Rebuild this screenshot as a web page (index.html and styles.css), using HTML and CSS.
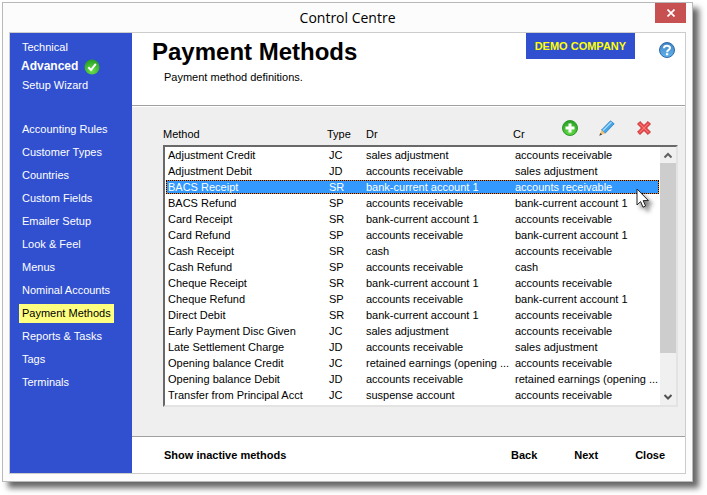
FILE: index.html
```html
<!DOCTYPE html>
<html lang="en">
<head>
    <meta charset="UTF-8">
    <meta name="viewport" content="width=device-width, initial-scale=1">
    <title>Control Centre</title>
    <link rel="stylesheet" href="styles.css">
</head>
<body>
<div class="window">
    <div class="titlebar">
        <span class="titlebar-text">Control Centre</span>
        <button class="titlebar-close" type="button" aria-label="Close window">
            <svg width="8" height="8" viewBox="0 0 8 8"><path d="M0.5 0.5L7.5 7.5M7.5 0.5L0.5 7.5" stroke="#fff" stroke-width="1.7"/></svg>
        </button>
    </div>
    <div class="client">
        <nav class="sidebar">
            <ul class="menu">
                <li><a href="#">Technical</a></li>
                <li><a class="current" href="#">Advanced
                    <svg width="16" height="16" viewBox="0 0 16 16">
                        <defs><radialGradient id="green" cx="50%" cy="75%" r="75%"><stop offset="0" stop-color="#6be04b"/><stop offset="1" stop-color="#249c22"/></radialGradient></defs>
                        <circle cx="8" cy="8" r="7.5" fill="url(#green)"/>
                        <path d="M4.3 8.3L7 11L11.8 4.8" fill="none" stroke="#fff" stroke-width="2"/>
                    </svg></a></li>
                <li><a href="#">Setup Wizard</a></li>
            </ul>
            <ul class="menu menu-pages">
                <li><a href="#">Accounting Rules</a></li>
                <li><a href="#">Customer Types</a></li>
                <li><a href="#">Countries</a></li>
                <li><a href="#">Custom Fields</a></li>
                <li><a href="#">Emailer Setup</a></li>
                <li><a href="#">Look &amp; Feel</a></li>
                <li><a href="#">Menus</a></li>
                <li><a href="#">Nominal Accounts</a></li>
                <li><a class="active" href="#">Payment Methods</a></li>
                <li><a href="#">Reports &amp; Tasks</a></li>
                <li><a href="#">Tags</a></li>
                <li><a href="#">Terminals</a></li>
            </ul>
        </nav>
        <main class="main">
            <header class="header">
                <div class="heading">
                    <h1>Payment Methods</h1>
                    <p>Payment method definitions.</p>
                </div>
                <span class="company">DEMO COMPANY</span>
                <button class="icon-button help" type="button" aria-label="Help">
                    <svg width="16" height="16" viewBox="0 0 16 16">
                        <defs><linearGradient id="blue" x2="0" y2="1"><stop offset="0" stop-color="#3f83c4"/><stop offset="1" stop-color="#62b4ec"/></linearGradient></defs>
                        <circle cx="8" cy="8" r="7.5" fill="url(#blue)" stroke="#2f68a8"/>
                        <path d="M5 6.2C5 3 11 3 11 6.1C11 8 8.1 7.8 8.1 10.2" fill="none" stroke="#fff" stroke-width="2"/>
                        <rect x="7" y="11.2" width="2.2" height="2" fill="#fff"/>
                    </svg>
                </button>
            </header>
            <section class="content">
                <div class="list">
                    <table class="methods">
                        <thead>
                        <tr>
                            <th>Method</th>
                            <th>Type</th>
                            <th>Dr</th>
                            <th>Cr</th>
                            <td class="tools">
                                <button class="icon-button" type="button" aria-label="Add">
                                    <svg width="16" height="16" viewBox="0 0 16 16">
                                        <circle cx="8" cy="8" r="7.5" fill="url(#green)" stroke="#2c9a2b"/>
                                        <path d="M8 3.5V12.5M3.5 8H12.5" stroke="#fff" stroke-width="3"/>
                                    </svg>
                                </button>
                                <button class="icon-button" type="button" aria-label="Edit">
                                    <svg width="16" height="16" viewBox="0 0 16 16">
                                        <path d="M2.5 10L11.5 0.8L15.2 3.8L6.2 13.2Z" fill="#45a5e8" stroke="#2c7fc0" stroke-width=".8"/>
                                        <path d="M4 10.5L12.5 2" stroke="#a6dcff" stroke-width="1.3"/>
                                        <path d="M2.5 10L6.2 13.2L0.5 15.5Z" fill="#edc078"/>
                                        <path d="M0.3 15.8L1.3 12.9L3.2 14.6Z" fill="#444"/>
                                    </svg>
                                </button>
                                <button class="icon-button" type="button" aria-label="Delete">
                                    <svg width="16" height="16" viewBox="0 0 16 16">
                                        <path d="M4 1.6L8 5.5L12 1.6L14.4 4L10.5 8L14.4 12L12 14.4L8 10.5L4 14.4L1.6 12L5.5 8L1.6 4Z" fill="#ee5050" stroke="#c72d2d"/>
                                        <path d="M3.6 3.6L12.4 12.4M12.4 3.6L3.6 12.4" stroke="#f77" stroke-width="1"/>
                                    </svg>
                                </button>
                            </td>
                        </tr>
                        </thead>
                        <tbody>
                        <tr><td>Adjustment Credit</td><td>JC</td><td>sales adjustment</td><td>accounts receivable</td></tr>
                        <tr><td>Adjustment Debit</td><td>JD</td><td>accounts receivable</td><td>sales adjustment</td></tr>
                        <tr class="selected"><td>BACS Receipt</td><td>SR</td><td>bank-current account 1</td><td>accounts receivable</td></tr>
                        <tr><td>BACS Refund</td><td>SP</td><td>accounts receivable</td><td>bank-current account 1</td></tr>
                        <tr><td>Card Receipt</td><td>SR</td><td>bank-current account 1</td><td>accounts receivable</td></tr>
                        <tr><td>Card Refund</td><td>SP</td><td>accounts receivable</td><td>bank-current account 1</td></tr>
                        <tr><td>Cash Receipt</td><td>SR</td><td>cash</td><td>accounts receivable</td></tr>
                        <tr><td>Cash Refund</td><td>SP</td><td>accounts receivable</td><td>cash</td></tr>
                        <tr><td>Cheque Receipt</td><td>SR</td><td>bank-current account 1</td><td>accounts receivable</td></tr>
                        <tr><td>Cheque Refund</td><td>SP</td><td>accounts receivable</td><td>bank-current account 1</td></tr>
                        <tr><td>Direct Debit</td><td>SR</td><td>bank-current account 1</td><td>accounts receivable</td></tr>
                        <tr><td>Early Payment Disc Given</td><td>JC</td><td>sales adjustment</td><td>accounts receivable</td></tr>
                        <tr><td>Late Settlement Charge</td><td>JD</td><td>accounts receivable</td><td>sales adjustment</td></tr>
                        <tr><td>Opening balance Credit</td><td>JC</td><td>retained earnings (opening ...</td><td>accounts receivable</td></tr>
                        <tr><td>Opening balance Debit</td><td>JD</td><td>accounts receivable</td><td>retained earnings (opening ...</td></tr>
                        <tr><td>Transfer from Principal Acct</td><td>JC</td><td>suspense account</td><td>accounts receivable</td></tr>
                        </tbody>
                    </table>
                    <div class="scrollbar" aria-hidden="true">
                        <svg width="16" height="16" viewBox="0 0 16 16"><path d="M4.5 10.5L8 7L11.5 10.5" fill="none" stroke="#606060" stroke-width="2"/></svg>
                        <div class="scrollbar-track"><div class="scrollbar-thumb"></div></div>
                        <svg width="16" height="16" viewBox="0 0 16 16"><path d="M4.5 6L8 9.5L11.5 6" fill="none" stroke="#505050" stroke-width="2"/></svg>
                    </div>
                    <svg class="pointer" width="22" height="26" viewBox="0 0 22 26">
                        <path d="M1 1V17L4.6 13.6L7 19.2L9.6 18L7.2 12.6H12.4Z" fill="#fff" stroke="#222"/>
                    </svg>
                </div>
            </section>
            <footer class="footer">
                <button class="inactive" type="button">Show inactive methods</button>
                <button type="button">Back</button>
                <button type="button">Next</button>
                <button type="button">Close</button>
            </footer>
        </main>
    </div>
</div>
</body>
</html>
```
FILE: styles.css
```css
* {
    box-sizing: border-box;
}

body {
    display: flex;
    min-height: 100vh;
    margin: 0;
    padding: 2px 14px 13px 2px;
    background: #fff;
    color: #000;
    font: 11px/14px "Liberation Sans", Arial, sans-serif;
}

button {
    padding: 0;
    border: 0;
    background: none;
    color: inherit;
    font: inherit;
}

svg {
    display: block;
    flex: none;
}

/* window frame */
.window {
    display: flex;
    flex: 1;
    flex-direction: column;
    padding: 0 6px 7px;
    border: 1px solid #b9b9b9;
    background: #fcfcfc;
    box-shadow: 6px 6px 6px rgba(0, 0, 0, .6);
}

.titlebar {
    display: flex;
    align-items: flex-start;
    height: 29px;
}

.titlebar-text {
    flex: 1;
    padding-left: 31px;
    font: 14px/29px "Open Sans", sans-serif;
    text-align: center;
}

.titlebar-close {
    display: flex;
    align-items: center;
    justify-content: center;
    width: 31px;
    height: 20px;
    background: #c75050;
}

.client {
    display: flex;
    flex: 1;
    border: 1px solid #ccc;
}

/* left menu */
.sidebar {
    flex: none;
    width: 122px;
    padding: 5px 9px;
    background: #3050d0;
}

.menu {
    margin: 0;
    padding: 0;
    list-style: none;
}

.menu li {
    display: flex;
}

.menu a {
    display: flex;
    align-items: center;
    gap: 6px;
    padding: 0 3px;
    color: #fff;
    line-height: 19px;
    text-decoration: none;
    white-space: nowrap;
}

.menu .current {
    padding-left: 2px;
    font-size: 12px;
    font-weight: bold;
}

.menu .active {
    background: #ffff80;
    color: #000;
}

.menu-pages {
    display: grid;
    gap: 4px;
    margin-top: 25px;
}

/* right side */
.main {
    display: flex;
    flex: 1;
    flex-direction: column;
    min-width: 0;
    background: #fff;
}

.header {
    display: flex;
    align-items: flex-start;
    gap: 24px;
    height: 73px;
    padding-right: 10px;
    border-bottom: 1px solid #a0a0a0;
}

.heading {
    flex: 1;
    padding: 4px 0 0 20px;
}

.heading h1 {
    margin: 0;
    font-size: 24px;
    line-height: 30px;
}

.heading p {
    margin: 3px 0 0 12px;
}

.company {
    padding: 0 9px;
    background: #3050d0;
    color: #ff0;
    font-weight: bold;
    line-height: 26px;
}

.help {
    margin-top: 9px;
}

.content {
    flex: 1;
    padding: 0 7px 0 31px;
    border-top: 1px solid #fff;
    background: #efefef;
}

.list {
    position: relative;
}

.methods,
.methods thead,
.methods tbody {
    display: block;
}

.methods tr {
    display: grid;
    grid-template-columns: 161px 37px 149px 1fr;
}

.methods th,
.methods td {
    padding: 0;
    font-weight: normal;
    text-align: left;
    white-space: nowrap;
}

.methods thead tr {
    grid-template-columns: 164px 39px 147px 1fr auto;
    align-items: end;
    height: 38px;
    padding-bottom: 4px;
}

.methods thead .tools {
    display: flex;
    align-self: center;
    gap: 21px;
    padding: 7px 26px 0 0;
}

.methods tbody {
    padding: 1px 17px 1px 1px;
    border: 2px solid #696969;
    border-right-color: #e3e3e3;
    border-bottom-color: #e3e3e3;
    background: #fff;
    line-height: 12px;
}

.methods tbody tr {
    margin-bottom: 2px;
    padding-left: 1px;
    border: 1px solid transparent;
}

/* focus ring alternates black and orange dots */
.methods tbody .selected {
    border: 1px dotted #000;
    background: linear-gradient(#39f, #39f) padding-box, linear-gradient(#e08020, #e08020) border-box;
    color: #fff;
}

.scrollbar {
    position: absolute;
    top: 40px;
    right: 2px;
    bottom: 2px;
    display: flex;
    flex-direction: column;
    width: 16px;
    background: #f0f0f0;
}

.scrollbar-track {
    flex: 1;
}

.scrollbar-thumb {
    height: 84%;
    background: #cdcdcd;
}

.pointer {
    position: absolute;
    top: 81px;
    right: 20px;
    filter: drop-shadow(4px 4px 2px rgba(0, 0, 0, .5));
}

.footer {
    display: flex;
    align-items: center;
    gap: 37px;
    height: 37px;
    padding: 0 20px 0 32px;
    border-top: 1px solid #a0a0a0;
    font-weight: bold;
}

.footer .inactive {
    margin-right: auto;
}

.icon-button {
    display: block;
}
```
